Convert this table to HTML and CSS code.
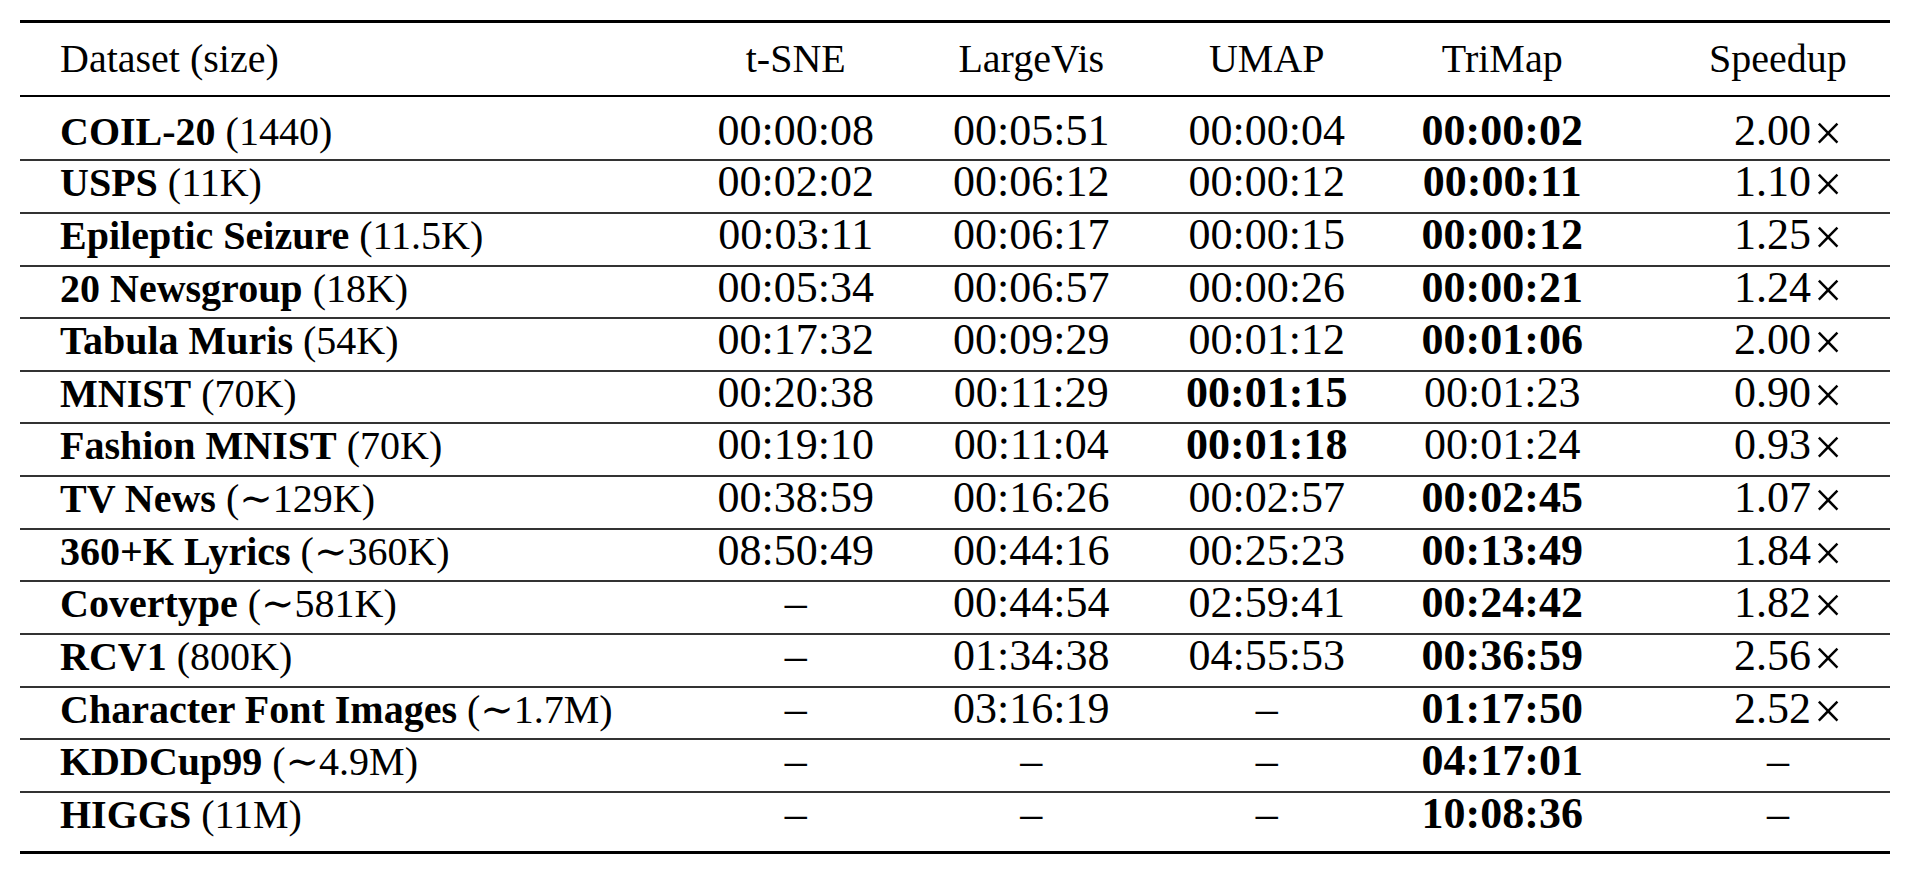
FILE: index.html
```html
<!DOCTYPE html>
<html>
<head>
<meta charset="utf-8">
<link rel="stylesheet" href="styles.css">
</head>
<body>
<div class="page">
<table class="tbl">
<colgroup>
<col class="c-name"><col class="c-num"><col class="c-num"><col class="c-num"><col class="c-num"><col class="c-speed">
</colgroup>
<thead>
<tr>
<th class="name">Dataset (size)</th>
<th>t-SNE</th>
<th>LargeVis</th>
<th>UMAP</th>
<th>TriMap</th>
<th class="sp">Speedup</th>
</tr>
</thead>
<tbody>
<tr class="first"><td class="name"><b>COIL-20</b> (1440)</td><td class="n">00:00:08</td><td class="n">00:05:51</td><td class="n">00:00:04</td><td class="n b">00:00:02</td><td class="n spv">2.00<span class="x">×</span></td></tr>
<tr><td class="name"><b>USPS</b> (11K)</td><td class="n">00:02:02</td><td class="n">00:06:12</td><td class="n">00:00:12</td><td class="n b">00:00:11</td><td class="n spv">1.10<span class="x">×</span></td></tr>
<tr><td class="name"><b>Epileptic Seizure</b> (11.5K)</td><td class="n">00:03:11</td><td class="n">00:06:17</td><td class="n">00:00:15</td><td class="n b">00:00:12</td><td class="n spv">1.25<span class="x">×</span></td></tr>
<tr><td class="name"><b>20 Newsgroup</b> (18K)</td><td class="n">00:05:34</td><td class="n">00:06:57</td><td class="n">00:00:26</td><td class="n b">00:00:21</td><td class="n spv">1.24<span class="x">×</span></td></tr>
<tr><td class="name"><b>Tabula Muris</b> (54K)</td><td class="n">00:17:32</td><td class="n">00:09:29</td><td class="n">00:01:12</td><td class="n b">00:01:06</td><td class="n spv">2.00<span class="x">×</span></td></tr>
<tr><td class="name"><b>MNIST</b> (70K)</td><td class="n">00:20:38</td><td class="n">00:11:29</td><td class="n b">00:01:15</td><td class="n">00:01:23</td><td class="n spv">0.90<span class="x">×</span></td></tr>
<tr><td class="name"><b>Fashion MNIST</b> (70K)</td><td class="n">00:19:10</td><td class="n">00:11:04</td><td class="n b">00:01:18</td><td class="n">00:01:24</td><td class="n spv">0.93<span class="x">×</span></td></tr>
<tr><td class="name"><b>TV News</b> (<span class="sim">∼</span>129K)</td><td class="n">00:38:59</td><td class="n">00:16:26</td><td class="n">00:02:57</td><td class="n b">00:02:45</td><td class="n spv">1.07<span class="x">×</span></td></tr>
<tr><td class="name"><b>360+K Lyrics</b> (<span class="sim">∼</span>360K)</td><td class="n">08:50:49</td><td class="n">00:44:16</td><td class="n">00:25:23</td><td class="n b">00:13:49</td><td class="n spv">1.84<span class="x">×</span></td></tr>
<tr><td class="name"><b>Covertype</b> (<span class="sim">∼</span>581K)</td><td class="n">–</td><td class="n">00:44:54</td><td class="n">02:59:41</td><td class="n b">00:24:42</td><td class="n spv">1.82<span class="x">×</span></td></tr>
<tr><td class="name"><b>RCV1</b> (800K)</td><td class="n">–</td><td class="n">01:34:38</td><td class="n">04:55:53</td><td class="n b">00:36:59</td><td class="n spv">2.56<span class="x">×</span></td></tr>
<tr><td class="name"><b>Character Font Images</b> (<span class="sim">∼</span>1.7M)</td><td class="n">–</td><td class="n">03:16:19</td><td class="n">–</td><td class="n b">01:17:50</td><td class="n spv">2.52<span class="x">×</span></td></tr>
<tr><td class="name"><b>KDDCup99</b> (<span class="sim">∼</span>4.9M)</td><td class="n">–</td><td class="n">–</td><td class="n">–</td><td class="n b">04:17:01</td><td class="n sp">–</td></tr>
<tr class="last"><td class="name"><b>HIGGS</b> (11M)</td><td class="n">–</td><td class="n">–</td><td class="n">–</td><td class="n b">10:08:36</td><td class="n sp">–</td></tr>
</tbody>
</table>
</div>
</body>
</html>
```

FILE: styles.css
```css
html, body {
  margin: 0;
  padding: 0;
  background: #ffffff;
}

.page {
  padding: 20px 22px 0 20px;
}

.tbl {
  width: 1870px;
  table-layout: fixed;
  border-collapse: separate;
  border-spacing: 0;
  font-family: "Liberation Serif", "DejaVu Serif", serif;
  color: #000;
}

.c-name { width: 658px; }
.c-num { width: 235.5px; }
.c-speed { width: 270px; }

.tbl th,
.tbl td {
  font-size: 40px;
  line-height: 36px;
  font-weight: normal;
  text-align: center;
  vertical-align: baseline;
  white-space: nowrap;
  padding: 4px 0 10.64px 0;
  border-top: 2px solid #333;
}

.tbl th {
  border-top: 3px solid #000;
  padding-top: 18px;
  padding-bottom: 17.5px;
}

.tbl .name {
  text-align: left;
  padding-left: 40px;
}

.tbl .sp {
  padding-left: 46px;
}

.tbl .spv {
  padding-left: 66px;
}

.tbl td.n {
  font-size: 44px;
  line-height: 33.3px;
}

.tbl td.b {
  font-weight: bold;
}

.tbl tr.first td {
  border-top: 2px solid #000;
  padding-top: 17.5px;
  padding-bottom: 9.3px;
}

.tbl tr.last td {
  padding-bottom: 18px;
  border-bottom: 3px solid #000;
}

.sim {
  font-family: "DejaVu Serif", serif;
  line-height: 0;
}

.x {
  font-size: 50px;
  line-height: 0;
  margin-left: 3px;
  vertical-align: -5px;
}
```
